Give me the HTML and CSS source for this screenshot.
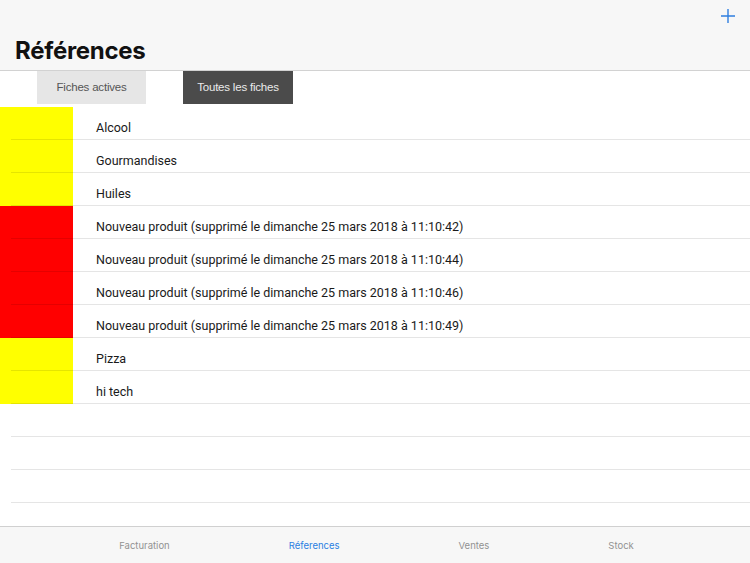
FILE: index.html
```html
<!DOCTYPE html>
<html lang="fr">
<head>
<meta charset="utf-8">
<title>Références</title>
<link rel="stylesheet" href="styles.css">
</head>
<body>
<div class="app">
  <header class="navbar">
    <div class="nav-top">
      <svg class="add" width="14" height="14" viewBox="0 0 14 14"><path d="M7 0V14M0 7H14" stroke="#2f7fe0" stroke-width="1.4" fill="none"/></svg>
    </div>
    <h1 class="title">Références</h1>
  </header>
  <div class="segments">
    <div class="seg seg-light">Fiches actives</div>
    <div class="seg seg-dark">Toutes les fiches</div>
  </div>
  <ul class="list">
    <li class="row"><span class="swatch yellow"></span><span class="label">Alcool</span></li>
    <li class="row"><span class="swatch yellow"></span><span class="label">Gourmandises</span></li>
    <li class="row"><span class="swatch yellow"></span><span class="label">Huiles</span></li>
    <li class="row"><span class="swatch red"></span><span class="label">Nouveau produit (supprimé le dimanche 25 mars 2018 à 11:10:42)</span></li>
    <li class="row"><span class="swatch red"></span><span class="label">Nouveau produit (supprimé le dimanche 25 mars 2018 à 11:10:44)</span></li>
    <li class="row"><span class="swatch red"></span><span class="label">Nouveau produit (supprimé le dimanche 25 mars 2018 à 11:10:46)</span></li>
    <li class="row"><span class="swatch red"></span><span class="label">Nouveau produit (supprimé le dimanche 25 mars 2018 à 11:10:49)</span></li>
    <li class="row"><span class="swatch yellow"></span><span class="label">Pizza</span></li>
    <li class="row"><span class="swatch yellow"></span><span class="label">hi tech</span></li>
    <li class="row"><span class="swatch"></span><span class="label"></span></li>
    <li class="row"><span class="swatch"></span><span class="label"></span></li>
    <li class="row"><span class="swatch"></span><span class="label"></span></li>
    <li class="row"><span class="swatch"></span><span class="label"></span></li>
  </ul>
  <nav class="tabbar">
    <span class="tab">Facturation</span>
    <span class="tab active">Réferences</span>
    <span class="tab">Ventes</span>
    <span class="tab">Stock</span>
  </nav>
</div>
</body>
</html>
```
FILE: styles.css
```css
* { box-sizing: border-box; }
html, body { margin: 0; padding: 0; }
body {
  width: 750px;
  height: 563px;
  overflow: hidden;
  background: #fff;
  font-family: "Liberation Sans", Arial, sans-serif;
  color: #111;
}
.app {
  width: 750px;
  height: 563px;
  display: flex;
  flex-direction: column;
  overflow: hidden;
}
.navbar {
  background: #f7f7f7;
  border-bottom: 1px solid #d2d2d2;
  height: 71px;
  flex: none;
  padding: 0 15px;
}
.nav-top {
  height: 30px;
  display: flex;
  justify-content: flex-end;
  align-items: flex-start;
  padding-top: 9px;
}
.title {
  margin: 0;
  font-family: "Inter", "Liberation Sans", sans-serif;
  font-size: 24px;
  font-weight: 700;
  letter-spacing: -0.3px;
  line-height: 28px;
  padding-top: 7px;
}
.segments {
  flex: none;
  height: 36px;
  display: flex;
  align-items: flex-start;
  gap: 37px;
  padding-left: 37px;
}
.seg {
  width: 110px;
  height: 33px;
  display: flex;
  align-items: center;
  justify-content: center;
  font-family: "Liberation Sans", Arial, sans-serif;
  font-size: 11.5px;
  letter-spacing: -0.2px;
  padding-bottom: 1px;
}
.seg-light { background: #e6e6e6; color: #555; width: 109px; }
.seg-dark { background: #4b4b4b; color: #eaeaea; }
.list {
  list-style: none;
  margin: 0;
  padding: 0;
  flex: 1;
  overflow: hidden;
}
.row {
  position: relative;
  height: 33px;
  display: flex;
  align-items: center;
}
.row::after {
  content: "";
  position: absolute;
  left: 11px;
  right: 0;
  bottom: 0;
  height: 1px;
  background: rgba(0, 0, 0, 0.1);
}
.swatch {
  width: 73px;
  height: 33px;
  flex: none;
}
.yellow { background: #ffff00; }
.red { background: #ff0000; }
.label {
  padding-left: 23px;
  font-family: "Roboto", "Liberation Sans", sans-serif;
  font-size: 12.5px;
  color: #1a1a1a;
  padding-top: 8px;
}
.tabbar {
  flex: none;
  height: 37px;
  background: #f7f7f7;
  border-top: 1px solid #d0d0d0;
  display: flex;
  justify-content: center;
  align-items: center;
  gap: 119px;
  padding-left: 3px;
}
.tab {
  font-family: "Inter", "Liberation Sans", sans-serif;
  font-size: 9.5px;
  color: #929292;
  padding-top: 1px;
}
.tab.active { color: #2a7fe2; }
```
